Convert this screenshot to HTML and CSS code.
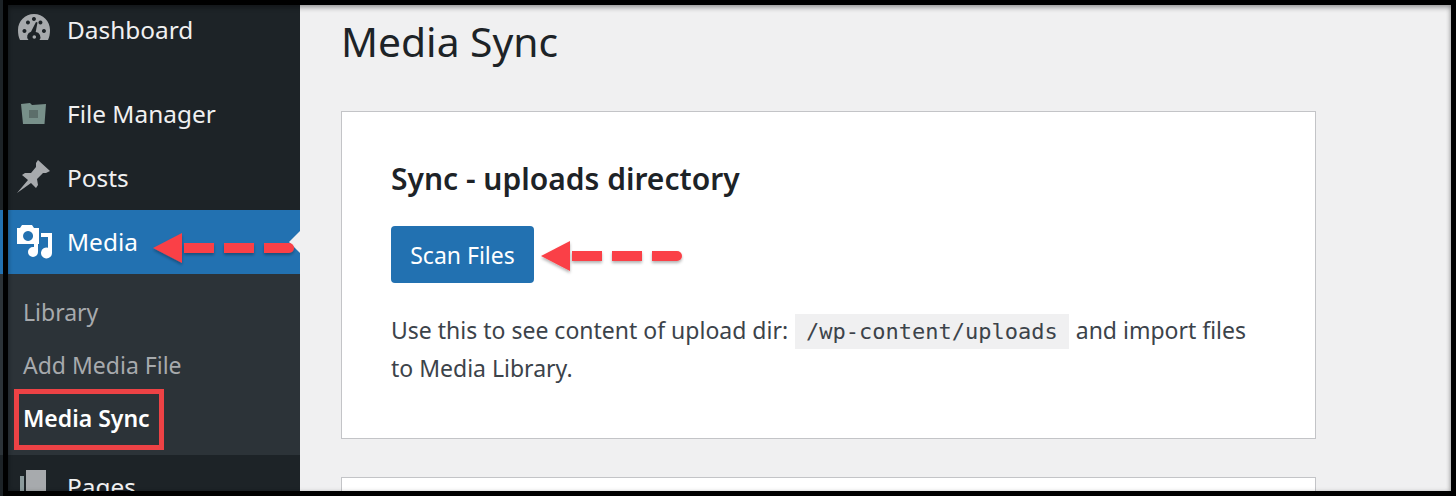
FILE: index.html
```html
<!DOCTYPE html>
<html>
<head>
  <title>Media Sync</title>
  <link rel="stylesheet" href="styles.css">
</head>
<body>
  <div class="admin">
    <div class="sidebar">
      <div class="menu-item dash">
        <div class="slot">
          <svg class="icon icon-dash" viewBox="0 0 32 26"><path fill="#a7aaad" fill-rule="evenodd" d="M16 0C7 0 0 7 0 16c0 4 .6 7 2 10h8.500a5 5 0 0 1 2.500-8.300L18 8l1.500.6-1.800 9.500a5 5 0 0 1 3.800 7.900H30c1.400-3 2-6 2-10C32 7 25 0 16 0zM6.500 15a2 2 0 1 1-.1 0zM10 6.500a2 2 0 1 1-.1 0zM16 3a2 2 0 1 1-.1 0zM22.500 6.500a2 2 0 1 1-.1 0zM26 15a2 2 0 1 1-.1 0z"/><path fill="#a7aaad" d="M14.500 23a1.800 1.800 0 1 0 3.600 0 1.800 1.800 0 1 0-3.600 0z"/></svg>
        </div>
        <span>Dashboard</span>
      </div>
      <div class="menu-item file">
        <div class="slot">
          <svg class="icon icon-file" viewBox="0 0 27 23"><path fill="#78908a" d="M1 2l9-1 2 2 14-1-1.500 20H3z"/><rect x="9" y="8" width="9" height="8" fill="#5c6e6a"/></svg>
        </div>
        <span>File Manager</span>
      </div>
      <div class="menu-item posts">
        <div class="slot">
          <svg class="icon icon-pin" viewBox="0 0 34 34"><path fill="#a7aaad" d="M21 0L33 11l-4 2h-3l-6 6 1 6-2 3-5-5L0 33l11-13-6-5 3-2h6l5-6V3z"/></svg>
        </div>
        <span>Posts</span>
      </div>
      <div class="menu-item current">
        <div class="slot">
          <svg class="icon icon-media" viewBox="0 0 36 38"><path fill="#fff" fill-rule="evenodd" d="M5 0h10l2 3h5v16H0V3h3zM11 6a5 5 0 1 0 .1 0z"/><path fill="#fff" d="M16 22a5 5 0 1 0 5 5v-8h-4v3.100zM24 8h11v20a5.500 5.500 0 1 1-4-5.300V12h-7z"/></svg>
        </div>
        <span>Media</span>
      </div>
      <div class="submenu">
        <div class="sub-item">Library</div>
        <div class="sub-item">Add Media File</div>
        <div class="sub-item active">Media Sync</div>
      </div>
      <div class="menu-item pages">
        <div class="slot">
          <svg class="icon icon-pages" viewBox="0 0 26 40"><path fill="#a7aaad" d="M6 0h20v40H6z"/><path fill="#8b9a9c" d="M0 6h4v34H0z"/></svg>
        </div>
        <span>Pages</span>
      </div>
    </div>

    <div class="content">
      <h1>Media Sync</h1>
      <div class="card">
        <h2>Sync - uploads directory</h2>
        <button class="scan-btn">Scan Files</button>
        <p>Use this to see content of upload dir: <code>/wp-content/uploads</code> and import files<br>to Media Library.</p>
      </div>
      <div class="card card-next"></div>
    </div>
  </div>

  <!-- annotations drawn on top of the screenshot -->
  <div class="red-box"></div>
  <svg class="arrow arrow-media" viewBox="0 0 144 40"><use href="#dash-arrow"/></svg>
  <svg class="arrow arrow-scan" viewBox="0 0 144 40">
    <defs>
      <filter id="soft" x="-10%" y="-30%" width="120%" height="170%"><feDropShadow dx="0" dy="2" stdDeviation="1.500" flood-color="#000" flood-opacity="0.3"/></filter>
      <g id="dash-arrow" filter="url(#soft)">
        <path fill="#fa4146" d="M1 20L30 5v30z"/>
        <path d="M32 20h30M72 20h30" stroke="#fa4146" stroke-width="10" fill="none"/>
        <path d="M112 15h25a5 5 0 0 1 0 10h-25z" fill="#fa4146"/>
      </g>
    </defs>
    <use href="#dash-arrow"/>
  </svg>
  <div class="frame"></div>
</body>
</html>
```

FILE: styles.css
```css
html, body {
  margin: 0;
  padding: 0;
  height: 496px;
  overflow: hidden;
}

body {
  position: relative;
  background: #f0f0f1;
  font-family: "Noto Sans", "Open Sans", sans-serif;
  color: #1d2327;
}

.admin {
  display: flex;
  height: 496px;
  overflow: hidden;
}

.sidebar {
  width: 300px;
  flex-shrink: 0;
  background: #1d2327;
  color: #f0f0f1;
}

.menu-item {
  display: flex;
  align-items: center;
  height: 64px;
  padding-bottom: 2px;
  font-size: 24.4px;
  box-sizing: border-box;
}

.slot {
  width: 67px;
  align-self: flex-start;
  flex-shrink: 0;
}

.icon {
  display: block;
}

.icon-dash {
  width: 32px;
  height: 26px;
  margin: 14px 0 0 18px;
}

.icon-file {
  width: 27px;
  height: 23px;
  margin: 20px 0 0 20px;
  filter: blur(0.7px);
}

.icon-pin {
  width: 34px;
  height: 34px;
  margin: 14px 0 0 17px;
}

.icon-media {
  width: 36px;
  height: 38px;
  margin: 15px 0 0 17px;
}

.icon-pages {
  width: 26px;
  height: 40px;
  margin: 15px 0 0 20px;
}

.dash {
  height: 60px;
}

.file {
  margin-top: 22px;
}

.current {
  position: relative;
  background: #2271b1;
  color: #fff;
}

.current::after {
  content: "";
  position: absolute;
  right: 0;
  top: 21px;
  border: 11px solid transparent;
  border-right-color: #f0f0f1;
  border-left: none;
}

.submenu {
  background: #2c3338;
  height: 181px;
  padding-top: 12px;
  box-sizing: border-box;
}

.sub-item {
  height: 53px;
  line-height: 53px;
  padding-left: 23px;
  font-size: 23px;
  color: #a7aaad;
}

.sub-item.active {
  color: #fff;
  font-weight: 600;
}

.content {
  flex: 1;
  padding: 0 140px 0 41px;
}

h1 {
  margin: 13px 0 0;
  font-size: 40.8px;
  font-weight: 400;
  line-height: 56px;
}

.card {
  margin-top: 42px;
  height: 328px;
  box-sizing: border-box;
  padding: 47px 49px;
  background: #fff;
  border: 1px solid #c3c4c7;
}

.card-next {
  margin-top: 38px;
}

h2 {
  margin: 0;
  font-size: 30px;
  font-weight: 600;
  line-height: 40px;
}

.scan-btn {
  display: block;
  margin-top: 27px;
  width: 143px;
  height: 57px;
  padding: 0;
  border: none;
  border-radius: 4px;
  background: #2271b1;
  color: #fff;
  font-family: inherit;
  font-size: 23px;
}

p {
  margin: 28px 0 0;
  font-size: 23px;
  line-height: 38px;
  color: #3c434a;
}

code {
  margin: 0 1px;
  padding: 5px 11px;
  background: #f0f0f1;
  font-family: "DejaVu Sans Mono", monospace;
  font-size: 22px;
  line-height: 1;
}

.red-box {
  position: absolute;
  left: 14px;
  top: 389px;
  width: 150px;
  height: 61px;
  box-sizing: border-box;
  border: 5px solid #ed4245;
}

.arrow {
  position: absolute;
  width: 144px;
  height: 40px;
}

.arrow-media {
  left: 152px;
  top: 228px;
}

.arrow-scan {
  left: 540px;
  top: 236px;
}

.frame {
  position: absolute;
  inset: 0;
  pointer-events: none;
}

.frame::before {
  content: "";
  position: absolute;
  left: 3px;
  top: 0;
  right: 0;
  bottom: 0;
  border-style: solid;
  border-color: #000;
  border-width: 5px 5px 5px 5px;
  box-shadow: inset 0 3px 5px rgba(0, 0, 0, 0.3), inset -1px 0 4px rgba(0, 0, 0, 0.15);
}
```
